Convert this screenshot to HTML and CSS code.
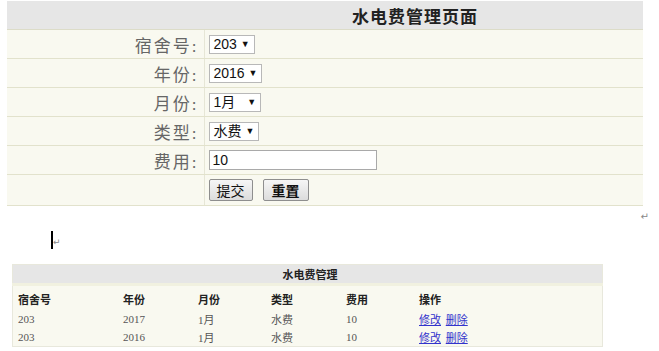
FILE: index.html
```html
<!DOCTYPE html>
<html lang="zh-CN">
<head>
    <meta charset="UTF-8">
    <title>水电费管理页面</title>
    <link rel="stylesheet" href="styles.css">
</head>
<body>
    <div class="page">
        <table class="form-table">
            <colgroup>
                <col class="label-col">
                <col>
            </colgroup>
            <tr class="head-row">
                <th></th>
                <th class="title">水电费管理页面</th>
            </tr>
            <tr>
                <td class="label">宿舍号:</td>
                <td><span class="select">203 <i>▼</i></span></td>
            </tr>
            <tr>
                <td class="label">年份:</td>
                <td><span class="select">2016 <i>▼</i></span></td>
            </tr>
            <tr>
                <td class="label">月份:</td>
                <td><span class="select wide">1月 <i>▼</i></span></td>
            </tr>
            <tr>
                <td class="label">类型:</td>
                <td><span class="select">水费 <i>▼</i></span></td>
            </tr>
            <tr>
                <td class="label">费用:</td>
                <td><input class="money" type="text" value="10"></td>
            </tr>
            <tr class="btn-row">
                <td></td>
                <td>
                    <button class="btn">提交</button>
                    <button class="btn bold">重置</button>
                </td>
            </tr>
        </table>
        <div class="mark-line"><span class="mark">↵</span></div>
        <div class="cursor-line"><span class="cursor"></span><span class="mark small">↵</span></div>

        <table class="list-table">
            <tr class="list-head">
                <th colspan="6">水电费管理</th>
            </tr>
            <tr class="cols">
                <th class="c1">宿舍号</th>
                <th class="c2">年份</th>
                <th class="c3">月份</th>
                <th class="c4">类型</th>
                <th class="c5">费用</th>
                <th class="c6">操作</th>
            </tr>
            <tr>
                <td>203</td>
                <td>2017</td>
                <td>1月</td>
                <td>水费</td>
                <td>10</td>
                <td><a href="#">修改</a> <a href="#">删除</a></td>
            </tr>
            <tr>
                <td>203</td>
                <td>2016</td>
                <td>1月</td>
                <td>水费</td>
                <td>10</td>
                <td><a href="#">修改</a> <a href="#">删除</a></td>
            </tr>
        </table>
    </div>
</body>
</html>
```

FILE: styles.css
```css
body, html {
    margin: 0;
    background-color: #ffffff;
    font-family: 'Liberation Serif', 'Noto Sans CJK SC', serif;
}

.page {
    padding: 1px 0 0 7px;
}

.form-table {
    width: 636px;
    table-layout: fixed;
    border-collapse: collapse;
    background-color: #f9f9f0;
}

.label-col {
    width: 197px;
}

.form-table td, .form-table th {
    padding: 0;
    height: 28px;
    border-bottom: 1px solid #e2e2cc;
}

.form-table td:first-child, .form-table th:first-child {
    border-right: 1px solid #e6e6d6;
}

.head-row th {
    background-color: #e6e6e6;
    border-bottom: 1px solid #dcdcc8;
}

.head-row th:first-child {
    border-right: none;
}

.title {
    text-align: left;
    padding-left: 148px !important;
    font-size: 17px;
    font-weight: bold;
    color: #222;
    letter-spacing: 1px;
}

.label {
    text-align: right;
    padding-right: 5px !important;
    font-size: 17px;
    color: #666;
    letter-spacing: 2px;
}

.form-table td:last-child {
    padding-left: 4px;
}

.select {
    display: inline-block;
    height: 17px;
    line-height: 17px;
    padding: 0 4px;
    border: 1px solid #b8b8b8;
    background-color: #fff;
    font-family: 'Liberation Sans', 'Noto Sans CJK SC', sans-serif;
    font-size: 14px;
    color: #111;
    vertical-align: middle;
}

.select i {
    font-style: normal;
    font-size: 9px;
    vertical-align: 2px;
}

.select.wide i {
    margin-left: 8px;
}

.money {
    width: 160px;
    height: 18px;
    padding: 0 3px;
    border: 1px solid #a9a9a9;
    font-family: 'Liberation Sans', sans-serif;
    font-size: 14px;
    color: #111;
    vertical-align: middle;
}

.btn-row td {
    height: 30px;
}

.btn {
    height: 22px;
    padding: 0 7px;
    margin-right: 6px;
    border: 1px solid #8e8e8e;
    border-radius: 2px;
    background: linear-gradient(#f6f6f6, #dcdcdc);
    font-family: 'Noto Sans CJK SC', sans-serif;
    font-size: 14px;
    color: #111;
    vertical-align: middle;
}

.btn.bold {
    font-weight: bold;
    padding: 0 8px;
}

.mark-line {
    height: 22px;
    text-align: right;
    width: 642px;
}

.mark {
    font-family: 'DejaVu Sans', sans-serif;
    font-size: 10px;
    color: #888;
}

.cursor-line {
    height: 36px;
    padding-left: 44px;
}

.cursor {
    display: inline-block;
    width: 2px;
    height: 18px;
    background-color: #000;
    vertical-align: top;
    margin-top: 3px;
}

.mark.small {
    font-size: 9px;
    vertical-align: top;
    margin-top: 9px;
    display: inline-block;
}

.list-table {
    margin-left: 5px;
    width: 591px;
    border-collapse: collapse;
    background-color: #f9f9f0;
    border: 1px solid #e8e8dc;
    font-size: 11px;
}

.list-table th, .list-table td {
    padding: 0 0 0 5px;
    height: 18px;
    text-align: left;
    color: #555;
}

.list-head th {
    background-color: #e6e6e6;
    text-align: center;
    font-weight: bold;
    color: #222;
    border-bottom: 3px solid #f1f1e0;
}

.cols th {
    font-weight: bold;
    color: #222;
    height: 22px;
    padding-top: 2px;
}

.c1 { width: 100px; }
.c2 { width: 70px; }
.c3 { width: 68px; }
.c4 { width: 70px; }
.c5 { width: 68px; }

.list-table a {
    color: #3333cc;
    margin-right: 2px;
}
```
